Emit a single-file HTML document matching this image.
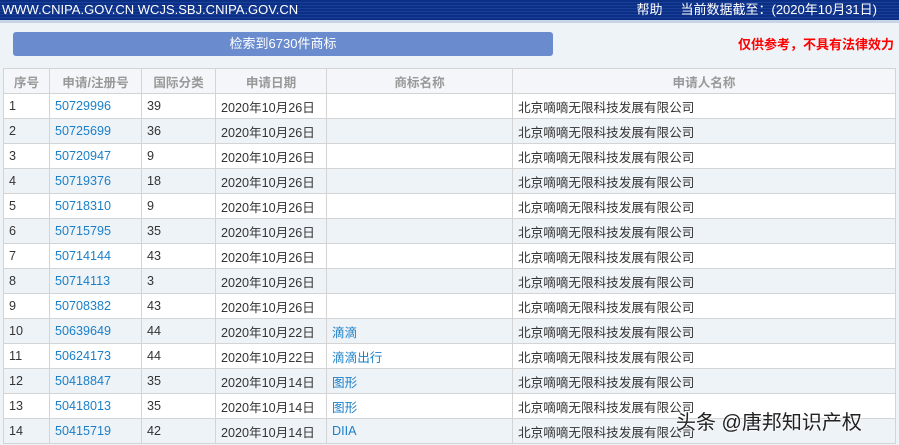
<!DOCTYPE html><html><head><meta charset="utf-8"><style>
body{margin:0;width:899px;height:445px;overflow:hidden;background:#eef3f7;font-family:"Liberation Sans","Noto Sans CJK SC",sans-serif;font-size:12.6px;color:#333;position:relative}
.top{position:absolute;left:0;top:0;width:899px;height:20px;background:repeating-linear-gradient(#0c2f86 0 2px,#1a3f98 2px 3px);color:#fff;font-size:13px;line-height:20px}
.top .l{position:absolute;left:2px;top:0}
.top .r{position:absolute;right:22px;top:0}
.line{position:absolute;top:20px;left:0;width:899px;height:3px;background:#c8d4e6}
.btn{position:absolute;left:13px;top:32px;width:540px;height:24px;background:#6a8ccf;border-radius:3px;color:#fff;text-align:center;line-height:24px;font-size:13px}
.warn{position:absolute;right:5px;top:34px;color:#f00;font-weight:bold;font-size:13px}
table{position:absolute;left:3px;top:68px;border-collapse:collapse;width:893px}
td,th{border:1px solid #d4d4d4;height:24px;padding:0 0 0 5px;text-align:left;font-weight:normal;white-space:nowrap}
th{color:#999;font-weight:bold;text-align:center;padding:0;background:#f4f6f9}
tr:nth-child(odd) td{background:#eef3f8}
tr:nth-child(even) td{background:#fff}
a{color:#1a7fc8;text-decoration:none}
.wm{position:absolute;left:676px;top:406px;font-size:20px;color:#222;text-shadow:0 0 2px #fff,0 0 2px #fff}
</style></head><body>
<div class="top"><span class="l">WWW.CNIPA.GOV.CN WCJS.SBJ.CNIPA.GOV.CN</span><span class="r">帮助&nbsp;&nbsp;&nbsp;&nbsp;&nbsp;当前数据截至：(2020年10月31日)</span></div>
<div class="line"></div>
<div class="btn">检索到6730件商标</div>
<div class="warn">仅供参考，不具有法律效力</div>
<table>
<colgroup><col style="width:46px"><col style="width:92px"><col style="width:74px"><col style="width:111px"><col style="width:186px"><col></colgroup>
<tr><th>序号</th><th>申请/注册号</th><th>国际分类</th><th>申请日期</th><th>商标名称</th><th>申请人名称</th></tr>
<tr><td>1</td><td><a>50729996</a></td><td>39</td><td>2020年10月26日</td><td></td><td>北京嘀嘀无限科技发展有限公司</td></tr>
<tr><td>2</td><td><a>50725699</a></td><td>36</td><td>2020年10月26日</td><td></td><td>北京嘀嘀无限科技发展有限公司</td></tr>
<tr><td>3</td><td><a>50720947</a></td><td>9</td><td>2020年10月26日</td><td></td><td>北京嘀嘀无限科技发展有限公司</td></tr>
<tr><td>4</td><td><a>50719376</a></td><td>18</td><td>2020年10月26日</td><td></td><td>北京嘀嘀无限科技发展有限公司</td></tr>
<tr><td>5</td><td><a>50718310</a></td><td>9</td><td>2020年10月26日</td><td></td><td>北京嘀嘀无限科技发展有限公司</td></tr>
<tr><td>6</td><td><a>50715795</a></td><td>35</td><td>2020年10月26日</td><td></td><td>北京嘀嘀无限科技发展有限公司</td></tr>
<tr><td>7</td><td><a>50714144</a></td><td>43</td><td>2020年10月26日</td><td></td><td>北京嘀嘀无限科技发展有限公司</td></tr>
<tr><td>8</td><td><a>50714113</a></td><td>3</td><td>2020年10月26日</td><td></td><td>北京嘀嘀无限科技发展有限公司</td></tr>
<tr><td>9</td><td><a>50708382</a></td><td>43</td><td>2020年10月26日</td><td></td><td>北京嘀嘀无限科技发展有限公司</td></tr>
<tr><td>10</td><td><a>50639649</a></td><td>44</td><td>2020年10月22日</td><td><a>滴滴</a></td><td>北京嘀嘀无限科技发展有限公司</td></tr>
<tr><td>11</td><td><a>50624173</a></td><td>44</td><td>2020年10月22日</td><td><a>滴滴出行</a></td><td>北京嘀嘀无限科技发展有限公司</td></tr>
<tr><td>12</td><td><a>50418847</a></td><td>35</td><td>2020年10月14日</td><td><a>图形</a></td><td>北京嘀嘀无限科技发展有限公司</td></tr>
<tr><td>13</td><td><a>50418013</a></td><td>35</td><td>2020年10月14日</td><td><a>图形</a></td><td>北京嘀嘀无限科技发展有限公司</td></tr>
<tr><td>14</td><td><a>50415719</a></td><td>42</td><td>2020年10月14日</td><td><a>DIIA</a></td><td>北京嘀嘀无限科技发展有限公司</td></tr>
</table>
<div class="wm">头条 @唐邦知识产权</div>
</body></html>
